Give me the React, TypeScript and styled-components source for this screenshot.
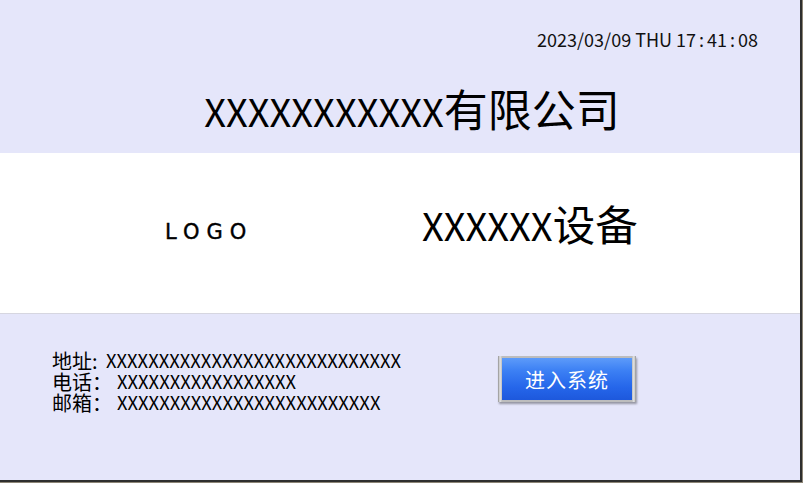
import React from "react";
import styled, { createGlobalStyle } from "styled-components";

const GlobalStyle = createGlobalStyle`
  html, body {
    margin: 0;
    padding: 0;
    background: #8c8576;
    width: 803px;
    height: 483px;
    overflow: hidden;
  }
  body {
    font-family: "Noto Sans CJK SC", "Noto Sans", sans-serif;
    color: #000;
  }
`;

const Panel = styled.div`
  width: 800px;
  height: 480px;
  display: flex;
  flex-direction: column;
  border-right: 2px solid #2e2e2e;
  border-bottom: 2px solid #2e2e2e;
  background: #e5e6fa;
`;

const Header = styled.header`
  height: 153px;
  display: flex;
  flex-direction: column;
  background: #e5e6fa;
`;

const Clock = styled.div`
  display: flex;
  justify-content: flex-end;
  gap: 4px;
  padding: 27px 42px 0 0;
  font-size: 18px;
  line-height: 24px;
  color: #111;
`;

const Colon = styled.span`
  margin: 0 3px;
`;

/* latin placeholders are set a bit smaller: the HMI font is condensed */
const Latin = styled.span<{ $size: number }>`
  font-size: ${(p) => p.$size}px;
`;

const CompanyName = styled.h1`
  margin: 31px 0 0;
  padding-left: 24px;
  text-align: center;
  font-size: 44px;
  font-weight: 400;
  line-height: 52px;
`;

const Banner = styled.section`
  height: 160px;
  display: flex;
  align-items: center;
  padding-left: 165px;
  background: #fff;
`;

const Logo = styled.div`
  width: 257px;
  font-family: "DejaVu Sans", sans-serif;
  font-size: 21px;
  letter-spacing: 7px;
  -webkit-text-stroke: 0.4px #000;
  margin-top: -2px;
`;

const ProductName = styled.h2`
  margin: 0 0 18px;
  font-size: 42.5px;
  font-weight: 400;
  line-height: 52px;
`;

const Footer = styled.footer`
  flex: 1;
  display: flex;
  align-items: flex-start;
  padding: 36px 0 0 52px;
  border-top: 1px solid #d6d6e0;
  background: #e5e6fa;
`;

const Contacts = styled.div`
  width: 348px;
  display: flex;
  flex-direction: column;
`;

const ContactLine = styled.div`
  display: flex;
  font-size: 20px;
  line-height: 21px;
  white-space: nowrap;
`;

const Label = styled.span<{ $width: number }>`
  width: ${(p) => p.$width}px;
  flex: none;
`;

const EnterButton = styled.button`
  margin: 6px 0 0 98px;
  width: 138px;
  height: 46px;
  padding: 2px 4px;
  border: none;
  background: linear-gradient(to right, #8e8e8e, #e6e6e6 2px, #bdbdbd 4px, #bdbdbd calc(100% - 4px), #e6e6e6 calc(100% - 2px), #8e8e8e);
  box-shadow: 1px 2px 2px rgba(0, 0, 0, 0.35);
  cursor: pointer;
`;

const ButtonFace = styled.span`
  display: flex;
  align-items: center;
  justify-content: center;
  width: 100%;
  height: 100%;
  background: linear-gradient(to bottom, #5d9bfa 0%, #3c80f4 30%, #2566ea 70%, #1d58dc 100%);
  color: #fff;
  font-family: "Noto Sans CJK SC", sans-serif;
  font-size: 20px;
  letter-spacing: 1px;
`;

const contacts = [
  { label: "地址:", width: 54, value: "XXXXXXXXXXXXXXXXXXXXXXXXXXXX" },
  { label: "电话：", width: 65, value: "XXXXXXXXXXXXXXXXX" },
  { label: "邮箱：", width: 65, value: "XXXXXXXXXXXXXXXXXXXXXXXXX" },
];

export default function App() {
  return (
    <>
      <GlobalStyle />
      <Panel>
        <Header>
          <Clock>
            <span>2023/03/09</span>
            <span>THU</span>
            <span>
              17<Colon>:</Colon>41<Colon>:</Colon>08
            </span>
          </Clock>
          <CompanyName>
            <Latin $size={38}>XXXXXXXXXXX</Latin>有限公司
          </CompanyName>
        </Header>
        <Banner>
          <Logo>LOGO</Logo>
          <ProductName>
            <Latin $size={38}>XXXXXX</Latin>设备
          </ProductName>
        </Banner>
        <Footer>
          <Contacts>
            {contacts.map((c) => (
              <ContactLine key={c.label}>
                <Label $width={c.width}>{c.label}</Label>
                <Latin $size={18.4}>{c.value}</Latin>
              </ContactLine>
            ))}
          </Contacts>
          <EnterButton>
            <ButtonFace>进入系统</ButtonFace>
          </EnterButton>
        </Footer>
      </Panel>
    </>
  );
}
